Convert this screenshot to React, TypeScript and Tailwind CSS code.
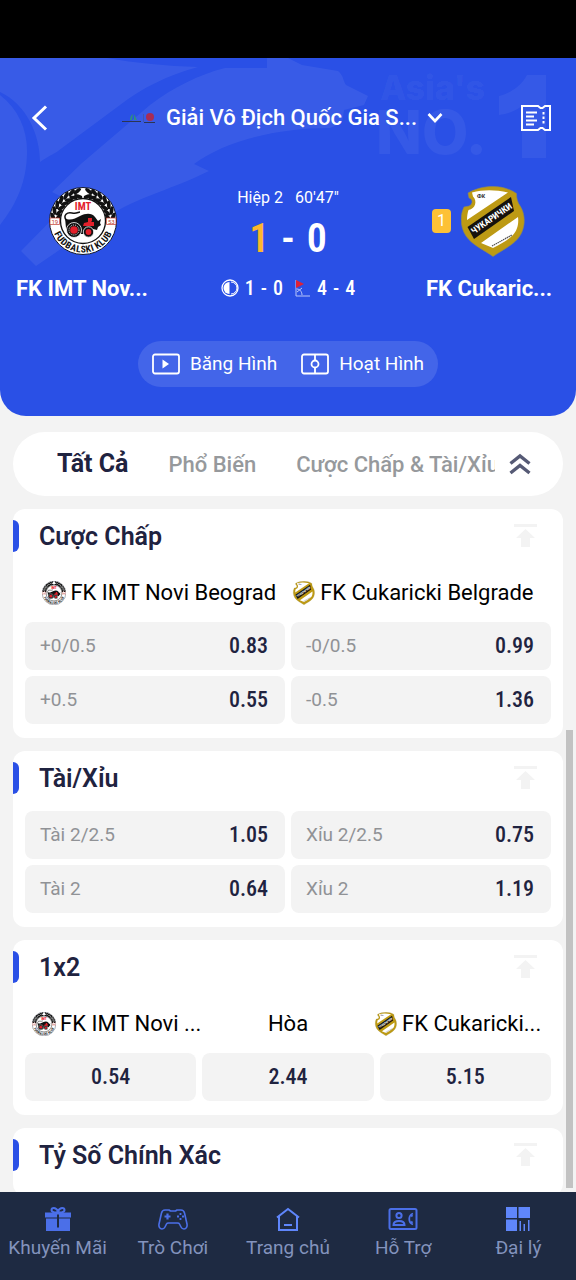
import { useState } from 'react';

const ODDS = "font-['Roboto_Condensed','Liberation_Sans_Narrow','Roboto',sans-serif]";

function ImtCrest({ className }: { className: string }) {
  return (
    <svg viewBox="0 0 68 68" className={className} aria-hidden="true">
      <defs>
        <path id="imt-ring" d="M5.5 34a28.5 28.5 0 0 0 57 0" />
      </defs>
      <circle cx="34" cy="34" r="33.5" fill="#fff" stroke="#14192b" strokeWidth="1" />
      <g fill="#111">
        {[-82, -70, -58, -46, -34, -22, -11, 11, 22, 34, 46, 58, 70, 82].map((a) => (
          <g key={a} transform={`rotate(${a} 34 34)`}>
            <ellipse cx="34" cy="3.6" rx="4.4" ry="1.9" transform={`rotate(${a < 0 ? -28 : 28} 34 3.6)`} />
            <ellipse cx="34" cy="8.8" rx="4.2" ry="1.8" transform={`rotate(${a < 0 ? 28 : -28} 34 8.8)`} />
          </g>
        ))}
      </g>
      <circle cx="34" cy="34" r="22.5" fill="#fff" stroke="#111" strokeWidth="1.3" />
      <g fill="#fff" stroke="#c0392b" strokeWidth="0.7">
        <path d="M1 31h9.500v6.500H1zM57.500 31H67v6.500h-9.500z" />
      </g>
      <g fill="#c0392b" fontFamily="Roboto, sans-serif" fontSize="6" textAnchor="middle">
        <text x="5.800" y="36.500">19</text>
        <text x="62.300" y="36.500">53</text>
      </g>
      <text x="34" y="23" textAnchor="middle" fontFamily="Roboto Condensed, Roboto, sans-serif" fontWeight="700" fontSize="10.500" fill="#e3202b">
        IMT
      </text>
      <path d="M17 33c-3-5 1-8 6-7s6-1 8-1" fill="none" stroke="#111" strokeWidth="1.500" />
      <path d="M16 31c4 3 10 1 15-2 6-3 12-3 15 1l3 4 3-2-1 4 1 2-3 2-1 3-4-1-4 2-3 3H21l-4-6z" fill="#111" />
      <path d="M39 31h4v3l-1 1h3v4H34l1-3 4-1z" fill="#e3202b" />
      <circle cx="25" cy="43" r="7.500" fill="#111" stroke="#fff" strokeWidth="0.800" />
      <circle cx="25" cy="43" r="5" fill="none" stroke="#fff" strokeWidth="0.900" strokeDasharray="1 1" />
      <circle cx="25" cy="43" r="3.800" fill="#e3202b" />
      <circle cx="39.500" cy="45" r="5.200" fill="#111" stroke="#fff" strokeWidth="0.800" />
      <circle cx="39.500" cy="45" r="2.900" fill="#e3202b" />
      <text fontFamily="Roboto Condensed, Roboto, sans-serif" fontWeight="700" fontSize="9.500" fill="#111">
        <textPath href="#imt-ring" startOffset="50%" textAnchor="middle">
          <tspan dy="3">FUDBALSKI KLUB</tspan>
        </textPath>
      </text>
    </svg>
  );
}

function CukarickiCrest({ className }: { className: string }) {
  return (
    <svg viewBox="0 0 64 71" className={className} aria-hidden="true">
      <path
        d="M32 .5c9 0 17 2.500 23.500 7 0 5 1 9 4 13 6 10 4.500 24-2.500 32-6 7-16 12-25 18C23 64 11 59 5 50-.5 42-1.500 30 3 21l5-1c4-2 4-7 0-8l-1-5C14 3 22 .5 32 .5z"
        fill="#bd9a14"
        stroke="#8d8a5a"
        strokeWidth="0.600"
      />
      <path d="M11 6.500c11-3 23-3 36 0L6 34c0-4 .5-7 1.500-10 7-1 9-9 4.500-13.500z" fill="#fff" />
      <path d="M6.500 41 50 11l3 14L13 53z" fill="#15120d" />
      <path d="M20 57 57 31c1 7-1 14-5 18-6 6-13 9-20 13z" fill="#fff" />
      <text x="20" y="12" textAnchor="middle" fontFamily="Liberation Sans, sans-serif" fontWeight="700" fontSize="5.500" fill="#222">
        ФК
      </text>
      <text
        x="30.500"
        y="35.500"
        transform="rotate(-34.500 30.500 32.500)"
        textAnchor="middle"
        fontFamily="Roboto Condensed, Roboto, sans-serif"
        fontWeight="700"
        fontSize="9"
        fill="#fff"
      >
        ЧУКАРИЧКИ
      </text>
      <path d="m31 60 20-11" stroke="#555" strokeWidth="1.300" strokeDasharray="1.500 .6" />
    </svg>
  );
}

function HeaderArt() {
  return (
    <svg viewBox="0 0 576 358" preserveAspectRatio="xMidYMin slice" className="absolute inset-0 h-full w-full" aria-hidden="true">
      <g fill="#fff" fillOpacity="0.065">
        <path d="M0 0h107c28 5 60 8 91 9-30 8-56 21-78 38L62 90c-7 6-14 8-22 14C40 76 26 46 0 34z" />
        <path d="M0 37c18 14 27 34 27 56 0 30-10 52-27 74z" />
        <path d="M267 0h21l14 7 36 6c6 5 5 10 8 14l22 11-4 9-20 5-2 13-12 5c-56 0-106 14-136 36l15 7c-40 20-80 28-110 52l-63 43-15-15 49-50-18-9 30-29 68-58c24-18 48-30 75-37h42z" />
      </g>
      <g fill="#fff" fillOpacity="0.055" fontFamily="Inter, sans-serif" fontWeight="800">
        <text x="380" y="42" fontSize="34">Asia's</text>
        <text x="376" y="96" fontSize="60">NO.</text>
        <path d="M546 17v83h-24V48c-7 5-14 8-23 9V38c12-3 22-10 28-21z" />
      </g>
    </svg>
  );
}

function TicketIcon() {
  return (
    <svg viewBox="0 0 30 26" className="h-[26px] w-[30px]" fill="none" stroke="#fff" strokeWidth="2" aria-hidden="true">
      <path d="M1 1h16l2.500 2h2L24 1h5v24h-5l-2.500-2h-2L17 25H1z" />
      <path d="M5 7.500h11M5 11.500h8M5 15.500h11M5 19.500h8" />
      <path d="M22.500 7v13" strokeDasharray="2.500 2" />
    </svg>
  );
}

function ToTop() {
  return (
    <button type="button" aria-label="Thu gọn" className="p-0">
      <svg viewBox="0 0 24 24" className="size-6" fill="#f3f3f3" aria-hidden="true">
        <path d="M0 0h23v3H0zM11.500 5 21 14h-5v9H7v-9H2z" />
      </svg>
    </button>
  );
}

function Card({ title, children }: { title: string; children?: React.ReactNode }) {
  return (
    <section className="rounded-xl bg-white pb-3.5">
      <div className="flex h-[54px] items-center justify-between pr-[25px]">
        <div className="flex items-center gap-5">
          <span className="h-8 w-1.5 rounded-r-md bg-[#2a50e6]" />
          <h2 className="pt-0.5 text-[25px] leading-8 font-semibold text-[#1f2340]">{title}</h2>
        </div>
        <ToTop />
      </div>
      {children}
    </section>
  );
}

function Odd({ label, value }: { label?: string; value: string }) {
  return (
    <button
      type="button"
      className={`flex h-12 items-center rounded-lg bg-[#f3f3f3] ${label ? 'justify-between pr-[17px] pl-[15px]' : 'justify-center'}`}
    >
      {label && <span className="text-[19px] text-[#909296]">{label}</span>}
      <span className={`${ODDS} text-[22px] leading-8 font-medium text-[#1f2340]`}>{value}</span>
    </button>
  );
}

const navBlue = '#4b6fe8';

const nav = [
  {
    label: 'Khuyến Mãi',
    icon: (
      <svg viewBox="0 0 28 26" className="h-[26px] w-7" fill={navBlue}>
        <path d="M1 6.500h26v5H1zM2 12.500h24v12.500H2z" />
        <path d="M14 6C11.500 7 7.500 6.500 7.500 4s4-3.500 6.500 1C16.500 .5 20.500 1.500 20.500 4s-4 3-6.500 2z" fill="none" stroke={navBlue} strokeWidth="2" />
        <path d="M13 8.500h2v13h-2z" fill="#1e2a42" />
      </svg>
    ),
  },
  {
    label: 'Trò Chơi',
    icon: (
      <svg viewBox="0 0 30 26" className="h-[26px] w-[30px]" fill="none" stroke={navBlue} strokeWidth="1.600" strokeLinejoin="round">
        <path d="M7 4h4l1.500 1h5L19 4h4c2 0 3 1 3.500 3L29 18c.5 3-1 5-3 5-1.500 0-2.500-1-3-2l-1.500-3c-.5-1-1-1-2-1h-9c-1 0-1.500 0-2 1L7 21c-.5 1-1.500 2-3 2-2 0-3.500-2-3-5L3.500 7C4 5 5 4 7 4z" />
        <path d="M9.500 7.500v6M6.500 10.500h6" strokeWidth="2.200" />
        <path d="M22.500 7v2M22.500 12v2M19 10.500h2M24 10.500h2" strokeWidth="1.800" />
      </svg>
    ),
  },
  {
    label: 'Trang chủ',
    icon: (
      <svg viewBox="0 0 26 26" className="size-[26px]" fill="none" stroke="#5f86fb" strokeWidth="2">
        <path d="M2 11.500 13 3l11 8.500M4 10v14h18V10M9 19h8" />
      </svg>
    ),
  },
  {
    label: 'Hỗ Trợ',
    icon: (
      <svg viewBox="0 0 30 26" className="h-[26px] w-[30px]" fill="none" stroke={navBlue} strokeWidth="2">
        <rect x="1.500" y="3" width="27" height="20" rx="1.500" />
        <circle cx="11" cy="9.500" r="2.600" />
        <path d="M5.500 19c0-3 3-4 5.500-4s5.500 1 5.500 4z" />
        <path d="M25 7.500c-5 2-5 9 0 11M22.500 8.500l2 2M22.500 17.500l2-2" strokeWidth="1.800" />
      </svg>
    ),
  },
  {
    label: 'Đại lý',
    icon: (
      <svg viewBox="0 0 26 26" className="size-[26px]" fill="#5f86fb">
        <path d="M1 1h11v11H1zM13.500 1h11.500v11H13.500zM1 13.500h11V25H1zM14.500 15h1.500v10h-1.500zM18.500 18h1.500v7h-1.500zM23 14h1.500v11H23z" />
      </svg>
    ),
  },
];

const tabs = ['Tất Cả', 'Phổ Biến', 'Cược Chấp & Tài/Xỉu'];

export default function App() {
  const [active, setActive] = useState(0);
  return (
    <div className="flex h-screen flex-col overflow-hidden bg-[#f3f3f3] font-['Roboto','Noto_Sans',sans-serif] text-black">
      <div className="h-[58px] shrink-0 bg-black" />
      <header className="relative shrink-0 overflow-hidden rounded-b-[26px] bg-[#2a50e6] pb-[29px] text-white">
        <HeaderArt />
        <div className="relative flex h-[120px] items-center justify-between pr-[25px] pl-[31px]">
          <button type="button" aria-label="Quay lại">
            <svg viewBox="0 0 17 26" className="h-[26px] w-[17px]" fill="none" stroke="#fff" strokeWidth="3">
              <path d="M15 1.500 3 13l12 11.500" />
            </svg>
          </button>
          <button type="button" className="flex min-w-0 items-center gap-2.5 pr-1">
            <svg viewBox="0 0 34 12" className="h-3 w-[34px]" aria-hidden="true">
              <path d="M0 9h19v1H0zM22 10h11v1H22z" fill="#2b3553" />
              <path d="M8 8c0-3 1-5 3-6l-1 6zM12 2l3 6h-3z" fill="#2f8a86" />
              <path d="M21 2h.6v8H21z" fill="#46538f" />
              <circle cx="28" cy="5" r="4" fill="#a82c55" />
            </svg>
            <span className="text-[22px] leading-8 font-medium">Giải Vô Địch Quốc Gia S...</span>
            <svg viewBox="0 0 16 12" className="h-3 w-4" fill="none" stroke="#fff" strokeWidth="2.600">
              <path d="m1.500 2 6.500 7 6.500-7" />
            </svg>
          </button>
          <button type="button" aria-label="Phiếu cược">
            <TicketIcon />
          </button>
        </div>

        <div className="relative grid grid-cols-3 px-4">
          <div className="flex flex-col gap-3">
            <div className="flex h-[86px] w-[134px] items-center justify-center">
              <ImtCrest className="size-[68px]" />
            </div>
            <p className="text-[22px] leading-[26px] font-bold">FK IMT Nov...</p>
          </div>
          <div className="flex flex-col items-center">
            <p className="flex h-10 items-center gap-3 text-base">
              <span>Hiệp 2</span>
              <span>60'47"</span>
            </p>
            <p className={`${ODDS} flex h-[42px] items-center gap-3 text-[40px] font-semibold`}>
              <span className="text-[#fbb72c]">1</span>
              <span>-</span>
              <span>0</span>
            </p>
            <p className={`${ODDS} mt-3 flex h-8 items-center gap-1.5 text-xl font-medium`}>
              <svg viewBox="0 0 18 18" className="size-[18px]" aria-hidden="true">
                <circle cx="9" cy="9" r="8" fill="none" stroke="#fff" strokeWidth="1.300" />
                <path d="M8.500 3v12a6 6 0 0 1 0-12z" fill="#fff" />
                <path d="M10 3a6 6 0 0 1 0 12" fill="none" stroke="#fff" strokeWidth="1" />
              </svg>
              <span className="flex gap-1.5">
                <span>1</span>
                <span>-</span>
                <span>0</span>
              </span>
              <svg viewBox="0 0 16 18" className="ml-1.5 h-[18px] w-4" aria-hidden="true">
                <path d="M1 1v16h14M2 13l5-4M2 10c3 0 5 3 5 6" fill="none" stroke="#b9c6fa" strokeWidth="1" />
                <path d="M1 1l8 4-8 4z" fill="#e02135" />
              </svg>
              <span className="flex gap-1.5">
                <span>4</span>
                <span>-</span>
                <span>4</span>
              </span>
            </p>
          </div>
          <div className="flex flex-col items-end gap-3">
            <div className="flex h-[86px] w-[134px] items-center justify-between pr-[35px] pl-1.5">
              <span className="flex h-6 w-[19px] items-center justify-center rounded-sm bg-[#fdc136] text-base">1</span>
              <CukarickiCrest className="h-[71px] w-16" />
            </div>
            <p className="w-[134px] text-[22px] leading-[26px] font-bold whitespace-nowrap">FK Cukaric...</p>
          </div>
        </div>

        <div className="relative mt-[37px] flex justify-center">
          <div className="flex h-[46px] items-center gap-6 rounded-full bg-white/12 px-3.5 text-[19px]">
            <button type="button" className="flex items-center gap-2.5">
              <svg viewBox="0 0 28 22" className="h-[22px] w-7" fill="none" stroke="#fff" strokeWidth="1.800">
                <rect x="1" y="1.500" width="26" height="19" rx="2" />
                <path d="M10.500 6.500v9l6.500-4.500z" fill="#fff" stroke="none" />
              </svg>
              Băng Hình
            </button>
            <button type="button" className="flex items-center gap-2.5">
              <svg viewBox="0 0 28 22" className="h-[22px] w-7" fill="none" stroke="#fff" strokeWidth="1.800">
                <rect x="1" y="1.500" width="26" height="19" rx="2" />
                <path d="M14 1.500v6M14 14.500v6" />
                <circle cx="14" cy="11" r="3.500" />
              </svg>
              Hoạt Hình
            </button>
          </div>
        </div>
      </header>

      <main className="relative min-h-0 flex-1 overflow-hidden px-[13px] pt-4">
        <div className="flex flex-col gap-[13px]">
          <div className="flex h-16 items-center gap-3.5 rounded-full bg-white pr-8 pl-11">
            <div role="tablist" className="flex min-w-0 flex-1 items-center gap-10 overflow-hidden whitespace-nowrap">
              {tabs.map((t, i) => (
                <button
                  key={t}
                  type="button"
                  role="tab"
                  aria-selected={i === active}
                  onClick={() => setActive(i)}
                  className={i === active ? 'text-[25px] font-bold text-[#1f2340]' : 'text-[22px] font-medium text-[#96999c]'}
                >
                  {t}
                </button>
              ))}
            </div>
            <button type="button" aria-label="Thu gọn tất cả">
              <svg viewBox="0 0 22 22" className="size-[22px]" fill="none" stroke="#565a75" strokeWidth="3.400">
                <path d="m1.500 10.500 9.500-7.500 9.500 7.500M1.500 20l9.500-7.500 9.500 7.500" />
              </svg>
            </button>
          </div>

          <Card title="Cược Chấp">
            <div className="flex h-[59px] items-center justify-center gap-4 text-[22px]">
              <span className="flex items-center gap-1">
                <ImtCrest className="size-6" />
                FK IMT Novi Beograd
              </span>
              <span className="flex items-center gap-1">
                <CukarickiCrest className="h-6 w-6" />
                FK Cukaricki Belgrade
              </span>
            </div>
            <div className="grid grid-cols-2 gap-1.5 px-3">
              <Odd label="+0/0.5" value="0.83" />
              <Odd label="-0/0.5" value="0.99" />
              <Odd label="+0.5" value="0.55" />
              <Odd label="-0.5" value="1.36" />
            </div>
          </Card>

          <Card title="Tài/Xỉu">
            <div className="grid grid-cols-2 gap-1.5 px-3 pt-1.5">
              <Odd label="Tài 2/2.5" value="1.05" />
              <Odd label="Xỉu 2/2.5" value="0.75" />
              <Odd label="Tài 2" value="0.64" />
              <Odd label="Xỉu 2" value="1.19" />
            </div>
          </Card>

          <Card title="1x2">
            <div className="flex h-[59px] items-center justify-between px-[19px] text-[22px]">
              <span className="flex w-[170px] items-center gap-1 whitespace-nowrap">
                <ImtCrest className="size-6 shrink-0" />
                FK IMT Novi ...
              </span>
              <span>Hòa</span>
              <span className="flex w-[170px] items-center gap-1 whitespace-nowrap">
                <CukarickiCrest className="h-6 w-6 shrink-0" />
                FK Cukaricki...
              </span>
            </div>
            <div className="grid grid-cols-3 gap-1.5 px-3">
              <Odd value="0.54" />
              <Odd value="2.44" />
              <Odd value="5.15" />
            </div>
          </Card>

          <Card title="Tỷ Số Chính Xác" />
        </div>
        <div className="absolute right-[3px] bottom-1 h-[458px] w-[7px] bg-[#c2c2c2]" />
      </main>

      <nav className="grid h-[88px] shrink-0 grid-cols-5 bg-[#1e2a42]">
        {nav.map((n) => (
          <a key={n.label} href="#" className="flex flex-col items-center gap-0.5 pt-3.5 text-[19px] leading-7 whitespace-nowrap text-[#8393bd]">
            {n.icon}
            {n.label}
          </a>
        ))}
      </nav>
    </div>
  );
}
